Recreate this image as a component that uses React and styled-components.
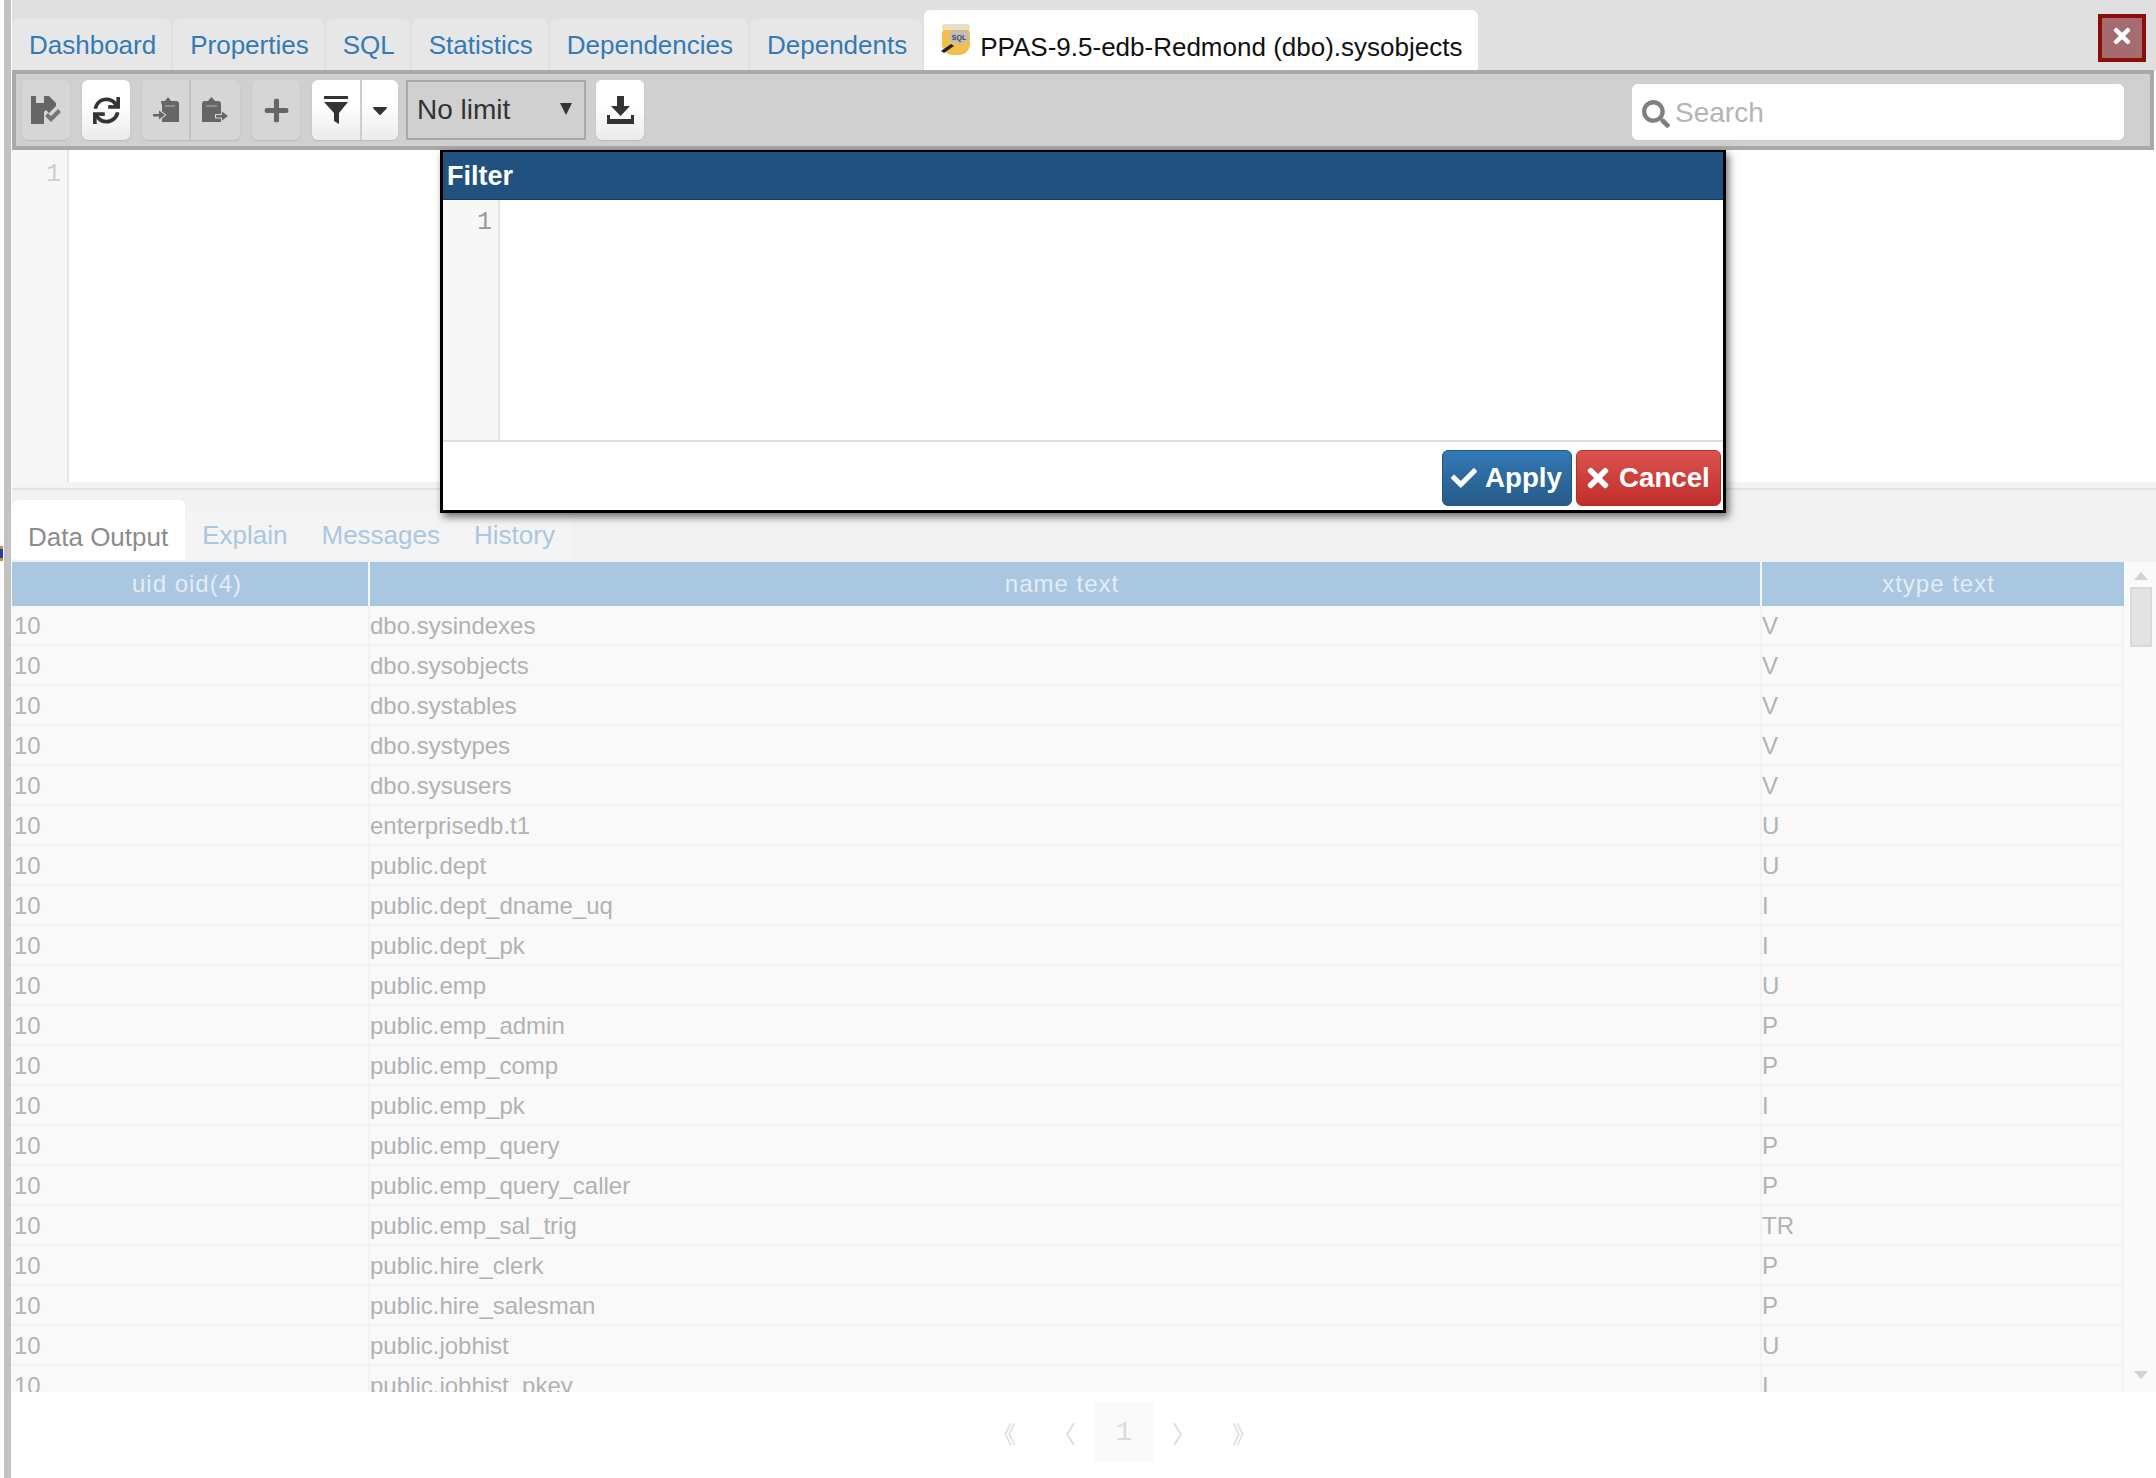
import React from 'react';
import styled, { createGlobalStyle } from 'styled-components';
import { FaCheck, FaTimes, FaSync, FaPlus, FaSearch, FaCaretDown } from 'react-icons/fa';

const Global = createGlobalStyle`
  html, body { margin: 0; padding: 0; background: #fff; }
  * { box-sizing: border-box; }
  #root { font-family: "Liberation Sans", Arial, sans-serif; }
`;

const Page = styled.div`
  position: relative;
  width: 2156px;
  height: 1478px;
  overflow: hidden;
  display: flex;
  padding-left: 4px;
  background: #fff;
`;
const Strip = styled.div`
  flex: 0 0 7px;
  background: #c2c2c2;
  margin-right: 1px;
`;
const Stray = styled.div`
  position: absolute;
  left: 0;
  top: 546px;
  width: 3px;
  height: 15px;
  background: linear-gradient(#c98a3a 0 3px, #1d3fb0 3px 12px, #c98a3a 12px);
`;
const Main = styled.div`
  flex: 1;
  min-width: 0;
  display: flex;
  flex-direction: column;
`;
const TabBar = styled.div`
  height: 70px;
  background: #e0e0e0;
  display: flex;
  align-items: flex-end;
  gap: 2px;
`;
const Tab = styled.div`
  height: ${p => (p.$active ? '60px' : '51px')};
  padding: ${p => (p.$active ? '14px 16px 0 17px' : '2px 15px 0 17px')};
  background: ${p => (p.$active ? '#fff' : '#e7e7e7')};
  border-radius: 6px 6px 0 0;
  display: flex;
  align-items: center;
  font-size: 26px;
  color: ${p => (p.$active ? '#111' : '#337ab7')};
  white-space: nowrap;
`;
const TabIcon = styled.svg`
  width: 30px;
  height: 32px;
  margin: -14px 9px 0 0;
  flex: none;
`;
const CloseBox = styled.div`
  align-self: flex-start;
  margin: 14px 10px 0 auto;
  width: 48px;
  height: 48px;
  background: #a56b6e;
  border: 4px solid #8b0e0e;
  color: #fff;
  display: flex;
  justify-content: center;
  padding-top: 6px;
  font-size: 24px;
`;
const Toolbar = styled.div`
  height: 80px;
  margin-right: 2px;
  border: 4px solid #a9a9a9;
  background: #d0d0d0;
  display: flex;
  align-items: center;
  padding: 0 26px 0 6px;
`;
const BtnGroup = styled.div`
  display: flex;
  margin-right: ${p => p.$mr ?? 12}px;
  & > *:not(:last-child) { border-top-right-radius: 0; border-bottom-right-radius: 0; border-right: 2px solid ${p => (p.$enabled ? '#d0d0d0' : '#c6c6c6')}; }
  & > *:not(:first-child) { border-top-left-radius: 0; border-bottom-left-radius: 0; }
`;
const ToolBtn = styled.div`
  width: ${p => p.$w ?? 48}px;
  height: 60px;
  border-radius: 6px;
  display: flex;
  align-items: center;
  justify-content: center;
  color: ${p => (p.$enabled ? '#333' : '#666')};
  background: ${p => (p.$enabled ? 'linear-gradient(#fff 40%, #ebebeb)' : '#d6d6d6')};
  box-shadow: 0 1px 2px rgba(0, 0, 0, 0.1);
  font-size: 27px;
`;
const LimitSelect = styled.div`
  width: 180px;
  height: 60px;
  margin-right: 10px;
  border: 2px solid #a9a9a9;
  display: flex;
  align-items: center;
  justify-content: space-between;
  padding: 0 12px 0 9px;
  font-size: 28px;
  color: #333;
`;
const SelectArrow = styled.svg`
  width: 12px;
  height: 12px;
  margin-top: -2px;
`;
const SearchBox = styled.div`
  margin-left: auto;
  width: 492px;
  height: 56px;
  margin-top: 4px;
  background: #fff;
  border-radius: 6px;
  display: flex;
  align-items: center;
  padding: 3px 0 0 10px;
  gap: 5px;
  color: #808080;
  font-size: 28px;
`;
const SearchText = styled.span`
  color: #b4b4b4;
  font-size: 28px;
  margin-top: -2px;
`;
const CodeArea = styled.div`
  height: 332px;
  display: flex;
  background: #fff;
`;
const Gutter = styled.div`
  flex: 0 0 ${p => p.$w}px;
  background: #f7f7f7;
  border-right: 2px solid #e6e6e6;
  text-align: right;
  padding: ${p => p.$pt}px ${p => p.$pr}px 0 0;
  font-family: "Liberation Mono", monospace;
  font-size: 25px;
  line-height: 30px;
  color: ${p => p.$color};
`;
const Splitter = styled.div`
  height: 8px;
  background: #f4f4f4;
  border-bottom: 2px solid #e2e2e2;
`;
const LowerTabs = styled.div`
  height: 72px;
  background: #f2f2f2;
  padding: 10px 0 2px;
  display: flex;
  align-items: flex-end;
`;
const LowerTab = styled.div`
  height: ${p => (p.$active ? '60px' : '50px')};
  padding: 0 17px 0 ${p => (p.$active ? 16 : 17)}px;
  padding-top: ${p => (p.$active ? '14px' : '0')};
  background: ${p => (p.$active ? '#fff' : '#f4f4f4')};
  border-radius: 6px 6px 0 0;
  display: flex;
  align-items: center;
  font-size: 26px;
  color: ${p => (p.$active ? '#8c8c8c' : '#aac7e2')};
  white-space: nowrap;
`;
const TableWrap = styled.div`
  height: 830px;
  display: flex;
  overflow: hidden;
`;
const Table = styled.div`
  width: 2112px;
  flex: none;
  overflow: hidden;
  background: #f9f9f9;
`;
const HeadRow = styled.div`
  height: 44px;
  background: #aac7e2;
  display: grid;
  grid-template-columns: 356px 1392px 364px;
`;
const HeadCell = styled.div`
  border-left: ${p => (p.$first ? '0' : '2px solid #f4f7fa')};
  display: flex;
  align-items: center;
  justify-content: center;
  padding-right: ${p => p.$pr ?? 6}px;
  font-size: 24px;
  letter-spacing: 1px;
  color: #e4ecf4;
`;
const Row = styled.div`
  height: 40px;
  border-bottom: 2px solid #f2f2f2;
  border-right: 2px solid #f2f2f2;
  display: grid;
  grid-template-columns: 356px 1392px 362px;
`;
const Cell = styled.div`
  border-left: ${p => (p.$first ? '0' : '2px solid #f2f2f2')};
  padding-left: ${p => (p.$first ? '2px' : '0')};
  padding-top: 2px;
  display: flex;
  align-items: center;
  font-size: 24px;
  color: #b2b2b2;
  white-space: nowrap;
`;
const ScrollBar = styled.div`
  flex: 1;
  position: relative;
  background: #fafafa;
  display: flex;
  flex-direction: column;
  align-items: center;
  padding-left: 2px;
`;
const ScrollThumb = styled.div`
  width: 22px;
  height: 60px;
  margin-top: 7px;
  background: #e3e3e3;
  border: 2px solid #dadada;
`;
const ArrowSvg = styled.svg`
  width: 14px;
  height: 8px;
  margin-top: ${p => p.$mt}px;
  flex: none;
  fill: #d2d2d2;
`;
const Pager = styled.div`
  height: 86px;
  display: flex;
  justify-content: center;
  padding: 10px 0 0 0;
  margin-left: 80px;
`;
const PageCell = styled.div`
  width: 60px;
  height: 60px;
  background: ${p => (p.$current ? '#fafafa' : 'transparent')};
  display: flex;
  align-items: center;
  justify-content: center;
  color: #dcdcdc;
  font-family: ${p => (p.$current ? '"Liberation Mono", monospace' : '"Noto Sans CJK SC", sans-serif')};
  font-size: ${p => (p.$current ? 28 : 24)}px;
`;
const Modal = styled.div`
  position: absolute;
  left: 440px;
  top: 150px;
  width: 1286px;
  height: 363px;
  background: #fff;
  border: 3px solid #000;
  border-top-width: 2px;
  box-shadow: 3px 4px 8px rgba(0, 0, 0, 0.55);
  display: flex;
  flex-direction: column;
  z-index: 5;
`;
const ModalHead = styled.div`
  height: 48px;
  flex: none;
  background: #21517f;
  border-bottom: 1px solid #17395a;
  color: #fff;
  font-weight: bold;
  font-size: 27px;
  display: flex;
  align-items: center;
  padding: 2px 0 0 4px;
`;
const ModalEditor = styled.div`
  height: 242px;
  flex: none;
  display: flex;
  border-bottom: 2px solid #dcdcdc;
`;
const ModalFoot = styled.div`
  flex: 1;
  display: flex;
  justify-content: flex-end;
  gap: 4px;
  padding: 8px 2px 0 0;
`;
const ActionBtn = styled.div`
  width: ${p => p.$w}px;
  height: 56px;
  border-radius: 6px;
  border: 1px solid ${p => p.$edge};
  background: linear-gradient(${p => p.$from}, ${p => p.$to});
  color: #fff;
  font-weight: bold;
  font-size: 27.7px;
  display: flex;
  align-items: center;
  gap: ${p => p.$gap}px;
  padding-left: ${p => p.$pl}px;
  white-space: nowrap;
`;

const SaveIcon = () => (
  <svg width="31" height="29" viewBox="0 0 31 29" fill="#666">
    <path d="M0 0H5V7H13V0H18L25 7V10L18 17L15 14L13 16V28H0Z" />
    <path d="M14 20L17 17L20 20L27 13L30 16L20 26Z" fill="#777" />
  </svg>
);
const PasteInIcon = () => (
  <svg width="27" height="26" viewBox="0 0 27 26" fill="#666">
    <path d="M9 4H13L16 0L19 4H24Q27 4 27 7V25H10V8Q9 6 9 4Z" />
    <path d="M13 9H23" stroke="#8c8c8c" strokeWidth="2" />
    <path d="M1 17H7V13.5L13 18L7 22.5V19.5H1Z" stroke="#d6d6d6" strokeWidth="2" paintOrder="stroke" />
  </svg>
);
const PasteOutIcon = () => (
  <svg width="27" height="26" viewBox="0 0 27 26" fill="#666">
    <path d="M3 4H6L9.5 0L13 4H16Q19 4 19 7V25H0V7Q0 4 3 4Z" />
    <path d="M4 9H15" stroke="#8c8c8c" strokeWidth="2" />
    <path d="M14 18H20V14.5L26 19L20 23.5V20.5H14Z" stroke="#d6d6d6" strokeWidth="2" paintOrder="stroke" />
  </svg>
);
const FilterIcon = () => (
  <svg width="24" height="28" viewBox="0 0 24 28" fill="#333">
    <rect x="0" y="0" width="24" height="3" />
    <path d="M0 6H24L15 17V28L10 25V17Z" />
  </svg>
);
const DownloadIcon = () => (
  <svg width="27" height="28" viewBox="0 0 27 28" fill="#333">
    <path d="M10 0H17V10H23L13.5 20L4 10H10Z" />
    <path d="M0 19H3V23H24V19H27V28H0Z" />
  </svg>
);
const SqlIcon = () => (
  <TabIcon viewBox="0 0 30 32">
    <rect x="1" y="0" width="28" height="31" rx="11" fill="#f2be4e" />
    <rect x="1" y="0" width="28" height="6" rx="3" fill="#e8e0c4" />
    <ellipse cx="18" cy="13" rx="10" ry="7" fill="#bdbdbd" />
    <text x="18" y="15.5" textAnchor="middle" fontSize="7" fontWeight="bold" fontFamily="Liberation Sans" fill="#444">SQL</text>
    <path d="M0 27L10 20L13 22L3 29Z" fill="#222" />
  </TabIcon>
);

const topTabs = ['Dashboard', 'Properties', 'SQL', 'Statistics', 'Dependencies', 'Dependents'];
const rows = [
  ['dbo.sysindexes', 'V'], ['dbo.sysobjects', 'V'], ['dbo.systables', 'V'], ['dbo.systypes', 'V'],
  ['dbo.sysusers', 'V'], ['enterprisedb.t1', 'U'], ['public.dept', 'U'], ['public.dept_dname_uq', 'I'],
  ['public.dept_pk', 'I'], ['public.emp', 'U'], ['public.emp_admin', 'P'], ['public.emp_comp', 'P'],
  ['public.emp_pk', 'I'], ['public.emp_query', 'P'], ['public.emp_query_caller', 'P'],
  ['public.emp_sal_trig', 'TR'], ['public.hire_clerk', 'P'], ['public.hire_salesman', 'P'],
  ['public.jobhist', 'U'], ['public.jobhist_pkey', 'I'],
];

export default function App() {
  return (
    <Page>
      <Global />
      <Stray />
      <Strip />
      <Main>
        <TabBar>
          {topTabs.map(t => <Tab key={t}>{t}</Tab>)}
          <Tab $active><SqlIcon />PPAS-9.5-edb-Redmond (dbo).sysobjects</Tab>
          <CloseBox><FaTimes /></CloseBox>
        </TabBar>
        <Toolbar>
          <BtnGroup><ToolBtn><SaveIcon /></ToolBtn></BtnGroup>
          <BtnGroup><ToolBtn $enabled><FaSync /></ToolBtn></BtnGroup>
          <BtnGroup>
            <ToolBtn $w={49}><PasteInIcon /></ToolBtn>
            <ToolBtn $w={49}><PasteOutIcon /></ToolBtn>
          </BtnGroup>
          <BtnGroup><ToolBtn><FaPlus /></ToolBtn></BtnGroup>
          <BtnGroup $enabled $mr={8}>
            <ToolBtn $enabled $w={50}><FilterIcon /></ToolBtn>
            <ToolBtn $enabled $w={36}><FaCaretDown size={24} /></ToolBtn>
          </BtnGroup>
          <LimitSelect>
            No limit
            <SelectArrow viewBox="0 0 12 12" fill="#333"><path d="M0 0H12L6 12Z" /></SelectArrow>
          </LimitSelect>
          <BtnGroup $mr={0}><ToolBtn $enabled><DownloadIcon /></ToolBtn></BtnGroup>
          <SearchBox><FaSearch /><SearchText>Search</SearchText></SearchBox>
        </Toolbar>
        <CodeArea>
          <Gutter $w={57} $pt={10} $pr={6} $color="#cfcfcf">1</Gutter>
        </CodeArea>
        <Splitter />
        <LowerTabs>
          <LowerTab $active>Data Output</LowerTab>
          <LowerTab>Explain</LowerTab>
          <LowerTab>Messages</LowerTab>
          <LowerTab>History</LowerTab>
        </LowerTabs>
        <TableWrap>
          <Table>
            <HeadRow>
              <HeadCell $first>uid oid(4)</HeadCell>
              <HeadCell>name text</HeadCell>
              <HeadCell $pr={9}>xtype text</HeadCell>
            </HeadRow>
            {rows.map(([name, type]) => (
              <Row key={name}>
                <Cell $first>10</Cell>
                <Cell>{name}</Cell>
                <Cell>{type}</Cell>
              </Row>
            ))}
          </Table>
          <ScrollBar>
            <ArrowSvg $mt={10} viewBox="0 0 14 8"><path d="M7 0L14 8H0Z" /></ArrowSvg>
            <ScrollThumb />
            <ArrowSvg $mt={724} viewBox="0 0 14 8"><path d="M0 0H14L7 8Z" /></ArrowSvg>
          </ScrollBar>
        </TableWrap>
        <Pager>
          <PageCell>《</PageCell>
          <PageCell>〈</PageCell>
          <PageCell $current>1</PageCell>
          <PageCell>〉</PageCell>
          <PageCell>》</PageCell>
        </Pager>
      </Main>
      <Modal>
        <ModalHead>Filter</ModalHead>
        <ModalEditor>
          <Gutter $w={57} $pt={8} $pr={6} $color="#999">1</Gutter>
        </ModalEditor>
        <ModalFoot>
          <ActionBtn $w={130} $gap={8} $pl={8} $edge="#245580" $from="#337ab7" $to="#265a88"><FaCheck size={26} />Apply</ActionBtn>
          <ActionBtn $w={145} $gap={6} $pl={6} $edge="#b92c28" $from="#d9534f" $to="#c12e2a"><FaTimes size={30} />Cancel</ActionBtn>
        </ModalFoot>
      </Modal>
    </Page>
  );
}
